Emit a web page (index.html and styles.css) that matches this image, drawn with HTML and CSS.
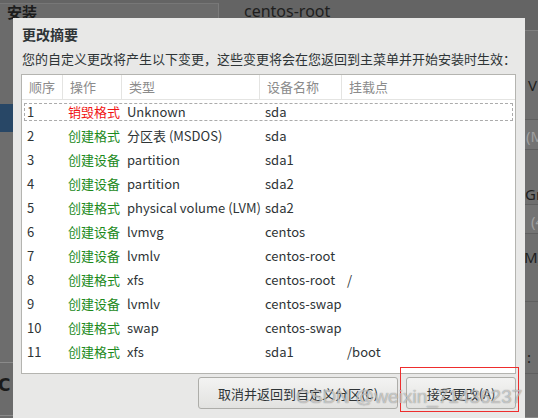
FILE: index.html
```html
<!DOCTYPE html>
<html lang="zh-CN">
<head>
<meta charset="utf-8">
<title>更改摘要</title>
<link rel="stylesheet" href="styles.css">
</head>
<body>
<div class="backdrop">
  <div class="bd-top">
    <div class="bd-tab"><span class="bd-title">安装</span></div>
    <div class="bd-name">centos-root</div>
  </div>
  <div class="bd-left">
    <div class="bd-spacer"></div>
    <div class="bd-blue"></div>
    <div class="bd-fill"></div>
    <div class="bd-bottom"><span class="bd-c">C</span></div>
  </div>
  <div class="bd-mid"></div>
  <div class="bd-right">
    <div class="rs rs-v"><span class="dark">V</span></div>
    <div class="rs rs-band"><span class="light">(M</span></div>
    <div class="rs rs-gr"><span class="dark">Gr</span></div>
    <div class="rs rs-band rs-band2"><span class="light">(4</span></div>
    <div class="rs rs-m"><span class="dark shift">M)</span></div>
    <div class="rs rs-colon"><span class="dark">:</span></div>
    <div class="rs rs-last"></div>
  </div>
</div>

<div class="dialog">
  <div class="dlg-title">更改摘要</div>
  <div class="dlg-sub">您的自定义更改将产生以下变更，这些变更将会在您返回到主菜单并开始安装时生效：</div>
  <div class="changes">
    <div class="hdr">
      <div class="hc">顺序</div>
      <div class="hc">操作</div>
      <div class="hc">类型</div>
      <div class="hc">设备名称</div>
      <div class="hc last">挂载点</div>
    </div>
    <div class="row focus"><div>1</div><div class="op-del">销毁格式</div><div>Unknown</div><div>sda</div><div></div></div>
    <div class="row"><div>2</div><div class="op-new">创建格式</div><div>分区表 (MSDOS)</div><div>sda</div><div></div></div>
    <div class="row"><div>3</div><div class="op-new">创建设备</div><div>partition</div><div>sda1</div><div></div></div>
    <div class="row"><div>4</div><div class="op-new">创建设备</div><div>partition</div><div>sda2</div><div></div></div>
    <div class="row"><div>5</div><div class="op-new">创建格式</div><div>physical volume (LVM)</div><div>sda2</div><div></div></div>
    <div class="row"><div>6</div><div class="op-new">创建设备</div><div>lvmvg</div><div>centos</div><div></div></div>
    <div class="row"><div>7</div><div class="op-new">创建设备</div><div>lvmlv</div><div>centos-root</div><div></div></div>
    <div class="row"><div>8</div><div class="op-new">创建格式</div><div>xfs</div><div>centos-root</div><div>/</div></div>
    <div class="row"><div>9</div><div class="op-new">创建设备</div><div>lvmlv</div><div>centos-swap</div><div></div></div>
    <div class="row"><div>10</div><div class="op-new">创建格式</div><div>swap</div><div>centos-swap</div><div></div></div>
    <div class="row"><div>11</div><div class="op-new">创建格式</div><div>xfs</div><div>sda1</div><div>/boot</div></div>
  </div>
  <div class="actions">
    <button class="btn btn-cancel">取消并返回到自定义分区(C)</button>
    <button class="btn btn-accept">接受更改(A)</button>
  </div>
</div>

<div class="mark-box"></div>
<div class="watermark">CSDN @weixin_71436237</div>
</body>
</html>
```
FILE: styles.css
```css
* { box-sizing: border-box; }
html, body { margin: 0; padding: 0; }
body {
  width: 538px;
  height: 418px;
  overflow: hidden;
  position: relative;
  background: #6b6b6b;
  font-family: "Noto Sans CJK SC", "Noto Sans", sans-serif;
  font-size: 13px;
  color: #2e3436;
}

/* dimmed installer behind the dialog */
.backdrop {
  display: grid;
  grid-template-columns: 13px 1fr 13px;
  grid-template-rows: 30px 1fr;
  width: 538px;
  height: 418px;
}
.bd-top {
  grid-column: 1 / -1;
  display: flex;
  align-items: flex-start;
  background: #646464;
}
.bd-tab {
  width: 219px;
  height: 30px;
  margin-top: 3px;
  border-top: 1px solid #777;
  border-right: 1px solid #7b7b7b;
  background: #6b6b6b;
  padding-left: 7px;
  padding-top: 0;
}
.bd-title {
  display: block;
  font-size: 15px;
  font-weight: bold;
  line-height: 15px;
  color: #1c1c1c;
}
.bd-name {
  margin-left: 25px;
  margin-top: 1px;
  font-family: "Noto Sans", sans-serif;
  font-size: 16px;
  line-height: 20px;
  color: #1e1e1e;
}
.bd-left {
  display: flex;
  flex-direction: column;
  overflow: hidden;
}
.bd-spacer { height: 74px; }
.bd-blue { height: 28px; background: #284766; }
.bd-fill { height: 230px; background: #6d6d6d; }
.bd-bottom {
  height: 54px;
  border-top: 1px solid #8a8a8a;
  border-bottom: 1px solid #8a8a8a;
  padding-top: 12px;
}
.bd-c {
  display: block;
  margin-left: -2px;
  font-family: "DejaVu Sans", sans-serif;
  font-weight: bold;
  font-size: 17px;
  line-height: 20px;
  color: #1b1b1b;
}
.bd-mid { background: #6b6b6b; }
.bd-right {
  display: flex;
  flex-direction: column;
  overflow: hidden;
  border-top: 1px solid #808080;
  background: #6e6e6e;
  font-family: "Noto Sans", sans-serif;
  font-size: 15px;
  line-height: 20px;
  white-space: nowrap;
}
.rs { border-bottom: 1px solid #5f5f5f; }
.rs-v { height: 95px; padding-top: 44px; padding-left: 3px; }
.rs-band { height: 33px; padding-top: 6px; padding-left: 1px; background: #737373; }
.rs-gr { height: 57px; padding-top: 34px; }
.rs-band2 { height: 32px; padding-left: 6px; }
.rs-m { height: 75px; padding-top: 13px; }
.rs-colon { height: 75px; padding-top: 45px; padding-left: 2px; }
.rs-last { height: 50px; border-bottom: 1px solid #888; }
.dark { color: #1e1e1e; }
.light { color: #a0a0a0; }
.shift { display: inline-block; margin-left: -1px; }

/* dialog */
.dialog {
  position: absolute;
  left: 13px;
  top: 18px;
  width: 512px;
  height: 410px;
  background: #e8e8e7;
  padding: 0 9px 0 8px;
  display: flex;
  flex-direction: column;
}
.dlg-title {
  margin-top: 6px;
  padding-left: 1px;
  font-size: 14px;
  font-weight: bold;
  line-height: 20px;
  color: #2e3436;
}
.dlg-sub {
  margin-top: 5px;
  padding-left: 1px;
  font-size: 13px;
  line-height: 20px;
  white-space: nowrap;
  color: #2e3436;
}
.changes {
  margin-top: 5px;
  height: 300px;
  border: 1px solid #b4b4b0;
  background: #ffffff;
}
.hdr, .row {
  display: grid;
  grid-template-columns: 41px 59px 138px 82px 1fr;
}
.hdr {
  height: 25px;
  border-bottom: 1px solid #e4e4e2;
}
.hc {
  padding-left: 7px;
  line-height: 24px;
  color: #8b8b8b;
  border-right: 1px solid #e4e4e2;
}
.hc.last { border-right: 0; }
.row {
  height: 24px;
  line-height: 24px;
  color: #2e3436;
  white-space: nowrap;
}
.row > div { padding-left: 5px; }
.row.focus { position: relative; }
.row.focus::after {
  content: "";
  position: absolute;
  top: 3px;
  bottom: 3px;
  left: 2px;
  right: 2px;
  border: 1px dashed #ababab;
}
.op-del { color: #f01414; }
.op-new { color: #1c8a1c; }

.actions {
  margin-top: 3px;
  display: flex;
  justify-content: flex-end;
  gap: 8px;
}
.btn {
  height: 32px;
  border: 1px solid #adada9;
  border-radius: 3px;
  background: linear-gradient(#f3f3f2, #e2e2e0);
  font-family: "Noto Sans CJK SC", "Noto Sans", sans-serif;
  font-size: 13px;
  color: #2e3436;
  padding: 0;
}
.btn-cancel { width: 200px; }
.btn-accept { width: 110px; }

/* annotation overlays */
.mark-box {
  position: absolute;
  left: 400px;
  top: 367px;
  width: 119px;
  height: 45px;
  border: 1px solid #ee2d2d;
}
.watermark {
  position: absolute;
  left: 296px;
  top: 386px;
  font-family: "Liberation Sans", sans-serif;
  font-size: 19px;
  line-height: 22px;
  color: rgba(255, 255, 255, 0.55);
  text-shadow: 0 0 1px rgba(60, 60, 60, 0.7);
  white-space: nowrap;
}
```
